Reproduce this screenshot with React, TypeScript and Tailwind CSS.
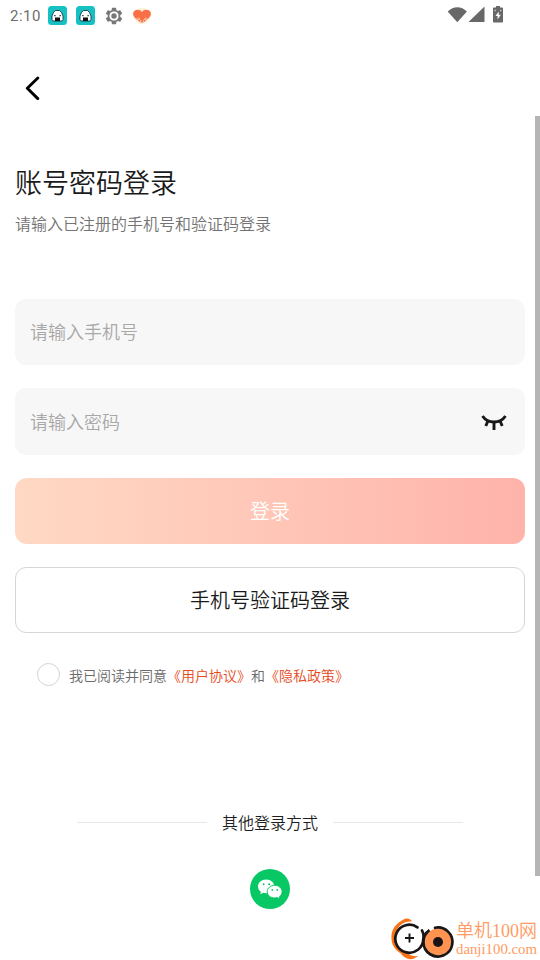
import type { ReactNode } from "react";

function AppBadge() {
  return (
    <svg viewBox="0 0 19 19" className="h-[19px] w-[19px] shrink-0">
      <rect width="19" height="19" rx="3.500" fill="#16c1c4" />
      <path d="M7.500 4.500h4l2 2 1.500 3.500v3.500l-1 1.500H5l-1-1.500V10l1.500-3.500z" fill="#fff" stroke="#123" strokeWidth="0.800" />
      <path d="M7 11.500h5V15H7z" fill="#111" />
      <path d="M6.300 9h1.200v1.200H6.300zM11.500 9h1.200v1.200h-1.200z" fill="#111" />
    </svg>
  );
}

function GearIcon() {
  return (
    <svg viewBox="0 0 24 24" className="h-5 w-5" fill="#777">
      <path
        fillRule="evenodd"
        d="M19.43 12.98c.04-.32.07-.64.07-.98s-.03-.66-.07-.98l2.11-1.65c.19-.15.24-.42.12-.64l-2-3.46c-.12-.22-.39-.3-.61-.22l-2.49 1c-.52-.4-1.08-.73-1.69-.98l-.38-2.65C14.46 2.18 14.25 2 14 2h-4c-.25 0-.46.18-.49.42l-.38 2.65c-.61.25-1.17.59-1.69.98l-2.49-1c-.23-.09-.49 0-.61.22l-2 3.46c-.13.22-.07.49.12.64l2.11 1.65c-.04.32-.07.65-.07.98s.03.66.07.98l-2.11 1.65c-.19.15-.24.42-.12.64l2 3.46c.12.22.39.3.61.22l2.49-1c.52.4 1.08.73 1.69.98l.38 2.65c.03.24.24.42.49.42h4c.25 0 .46-.18.49-.42l.38-2.65c.61-.25 1.17-.59 1.69-.98l2.49 1c.23.09.49 0 .61-.22l2-3.46c.12-.22.07-.49-.12-.64zM12 6.200a5.800 5.800 0 1 0 0 11.600 5.800 5.800 0 0 0 0-11.600z"
      />
      <circle cx="12" cy="12" r="6" fill="none" stroke="#777" strokeWidth="0.600" />
      <circle cx="12" cy="12" r="3.200" />
    </svg>
  );
}

function HeartHandsIcon() {
  return (
    <svg viewBox="0 0 20 18" className="h-[18px] w-5">
      <circle cx="10" cy="9" r="8.300" fill="#fdf0dc" />
      <path
        d="M10 5.200C8 1.800 3.200 2.200 1.400 5.200c-1 2 .2 4.600 2.200 6.200l3.400 2.800 1.500 1.300h3l1.500-1.300 3.400-2.800c2-1.600 3.200-4.200 2.200-6.200C16.800 2.200 12 1.800 10 5.200z"
        fill="#fa7046"
      />
      <path d="M4.500 11.500l2.500 1.300M6.500 10.500l1.500 2.500M15.500 11.500L13 12.800M13.500 10.500L12 13M8.700 13v2.500M11.300 13v2.500" stroke="#fdf0dc" strokeWidth="0.700" fill="none" />
    </svg>
  );
}

function StatusBar() {
  return (
    <header className="flex h-8 items-center justify-between pr-[35px] pl-[10px]">
      <div className="flex items-center">
        <span className="w-[38px] font-[Roboto] text-[15px] font-normal tracking-[0.5px] text-[#6d6d6d]">2:10</span>
        <div className="mb-px flex items-center gap-[9px]">
          <AppBadge />
          <AppBadge />
        </div>
        <div className="ml-[9px] flex items-center gap-2">
          <GearIcon />
          <HeartHandsIcon />
        </div>
      </div>
      <svg viewBox="0 0 58 20" className="mb-0.5 h-5 w-[58px]" fill="#686868">
        <path d="M.7 6.600C6.300.9 14.300.9 19.900 6.600L10.300 17.300z" />
        <path d="M37.500 1.500V17h-16z" />
        <path d="M49 2.500V1h4v1.500h2.200q.8 0 .8.800v13.400q0 .8-.8.800h-8.400q-.8 0-.8-.8V3.300q0-.8.800-.8z" />
        <path d="M51.700 6.500l-3.200 4.500h2.100v3.500l3.200-4.700h-2.100z" fill="#fff" />
        <path d="M47.500 4.800h1.400v1.400h-1.400zM53 4.800h1.400v1.400H53z" fill="#c4c4c4" />
      </svg>
    </header>
  );
}

function ClosedEyeIcon() {
  return (
    <svg viewBox="0 0 26 16" className="h-4 w-[26px]" fill="none" stroke="#181818" strokeWidth="2.900">
      <path d="M1.500 2C6.800 10 19.200 10 24.500 2" />
      <path d="M13 8v8M7 6.800L4.800 12M19 6.800l2.200 5.200" />
    </svg>
  );
}

function Field({ placeholder, type, className, children }: { placeholder: string; type: string; className: string; children?: ReactNode }) {
  return (
    <div className={`flex items-center rounded-[11px] bg-[#f7f7f7] pr-[18px] pl-[15px] ${className}`}>
      <input
        type={type}
        placeholder={placeholder}
        className="min-w-0 flex-1 bg-transparent text-[18px] text-[#1a1a1a] outline-none placeholder:text-[#a8a8a8]"
      />
      {children}
    </div>
  );
}

function WechatIcon() {
  return (
    <svg viewBox="0 0 40 40" className="h-10 w-10">
      <circle cx="20" cy="20" r="20" fill="#07c864" />
      <path d="M16.200 10.500c-4.700 0-8.200 3-8.200 6.900 0 2.200 1.100 4.100 3 5.400l-.8 2.500 3-1.500c1 .3 2 .4 3 .4 4.600 0 8.100-3 8.100-6.800 0-3.900-3.500-6.900-8.100-6.900z" fill="#fff" />
      <circle cx="13.600" cy="15.300" r="1" fill="#07c864" />
      <circle cx="19.200" cy="15.300" r="1" fill="#07c864" />
      <path
        d="M24.700 16.300c-4.300 0-7.500 2.900-7.500 6.400s3.200 6.300 7.500 6.300c.9 0 1.700-.1 2.500-.4l2.900 1.400-.7-2.300c1.700-1.200 2.700-3 2.700-5 0-3.500-3.200-6.400-7.400-6.400z"
        fill="#fff"
        stroke="#07c864"
        strokeWidth="1"
      />
      <circle cx="22.300" cy="20.900" r="0.900" fill="#07c864" />
      <circle cx="27.200" cy="20.900" r="0.900" fill="#07c864" />
    </svg>
  );
}

function SiteMark() {
  return (
    <div className="absolute top-[916px] left-[390px] flex h-11 w-[150px] items-start">
      <svg viewBox="0 0 66 44" className="h-11 w-[66px] shrink-0" fill="none">
        <path
          d="M22 5.500C19.500 1.800 16 1.800 12 4.500 4 9 1 15 1.500 23c.5 7 4 11 9.500 14.500 1.500 2 2.500 3.500 6 5 4 1.500 8 .5 11-2.500-4 .5-7-.3-10-2.300C5 33 0 22 9.500 10 13 6.500 17 5.200 22 5.500z"
          fill="#f97316"
        />
        <circle cx="19.300" cy="22.700" r="13" fill="#fff" />
        <circle cx="48" cy="26" r="13.500" fill="#ff934f" />
        <g stroke="#191516" strokeWidth="2.700" strokeLinecap="round">
          <path d="M27.500 11.400A14 14 0 1 0 33.300 23" />
          <path d="M45 11.800A14.500 14.500 0 1 1 39.500 14.200C35.500 17 33 21 33.300 26" />
          <path d="M32 14.500c1.300 2 1.700 4 1.700 7" />
        </g>
        <circle cx="48" cy="26" r="5" fill="#191516" />
        <path d="M19.500 17.500v9M15 22h9" stroke="#191516" strokeWidth="1.900" />
      </svg>
      <div className="flex flex-col font-['Liberation_Serif','Noto_Sans_CJK_SC',serif] whitespace-nowrap text-[#ff9b62]">
        <span className="mt-[5px] text-[18px] leading-[21px]">单机100网</span>
        <span className="text-[14.800px] leading-[15px]">danji100.com</span>
      </div>
    </div>
  );
}

export default function App() {
  return (
    <div className="relative flex h-[960px] w-[540px] flex-col overflow-hidden bg-white font-['Noto_Sans_CJK_SC',sans-serif] font-[350]">
      <StatusBar />

      <nav className="flex h-[112px] items-center px-6">
        <button aria-label="返回" className="flex h-6 w-[18px]">
          <svg viewBox="0 0 18 24" className="h-6 w-[18px]" fill="none" stroke="#000" strokeWidth="2.900" strokeLinecap="round" strokeLinejoin="round">
            <path d="M13.800 2L3.300 12.300l10.500 10.300" />
          </svg>
        </button>
      </nav>

      <main className="flex flex-col px-[15px]">
        <h1 className="mt-[18px] text-[27px] leading-10 text-[#1a1a1a]">账号密码登录</h1>
        <p className="mt-[9px] text-[16px] leading-6 text-[#737373]">请输入已注册的手机号和验证码登录</p>

        <form className="mt-16 flex flex-col gap-[23px]">
          <Field placeholder="请输入手机号" type="tel" className="h-[66px] pb-0.5" />
          <Field placeholder="请输入密码" type="password" className="h-[67px]">
            <ClosedEyeIcon />
          </Field>
          <button type="button" className="h-[66px] rounded-[12px] bg-linear-to-r from-[#ffd9c4] to-[#ffb3aa] text-[20px] text-white">
            登录
          </button>
          <button type="button" className="h-[66px] rounded-[11px] border border-[#d6d6d6] text-[20px] text-[#1a1a1a]">
            手机号验证码登录
          </button>
        </form>

        <div className="mt-[30px] ml-[22px] flex items-center gap-[9px]">
          <span className="h-[23px] w-[23px] rounded-full border border-[#d3d3d3]" />
          <p className="text-[14px] leading-5 whitespace-nowrap text-[#6a6a6a]">
            我已阅读并同意<span className="text-[#e64a19]">《用户协议》</span>和<span className="text-[#e64a19]">《隐私政策》</span>
          </p>
        </div>
      </main>

      <section className="mt-[124px] flex flex-col items-center">
        <div className="flex items-center gap-[15px]">
          <span className="h-px w-[130px] bg-[#e8e8e8]" />
          <h2 className="text-[16px] leading-6 text-[#1f1f1f]">其他登录方式</h2>
          <span className="h-px w-[130px] bg-[#e8e8e8]" />
        </div>
        <button aria-label="微信" className="mt-[35px]">
          <WechatIcon />
        </button>
      </section>

      <div className="absolute top-[116px] right-0 h-[760px] w-[5px] bg-[#b5b5b5]" />
      <SiteMark />
    </div>
  );
}
